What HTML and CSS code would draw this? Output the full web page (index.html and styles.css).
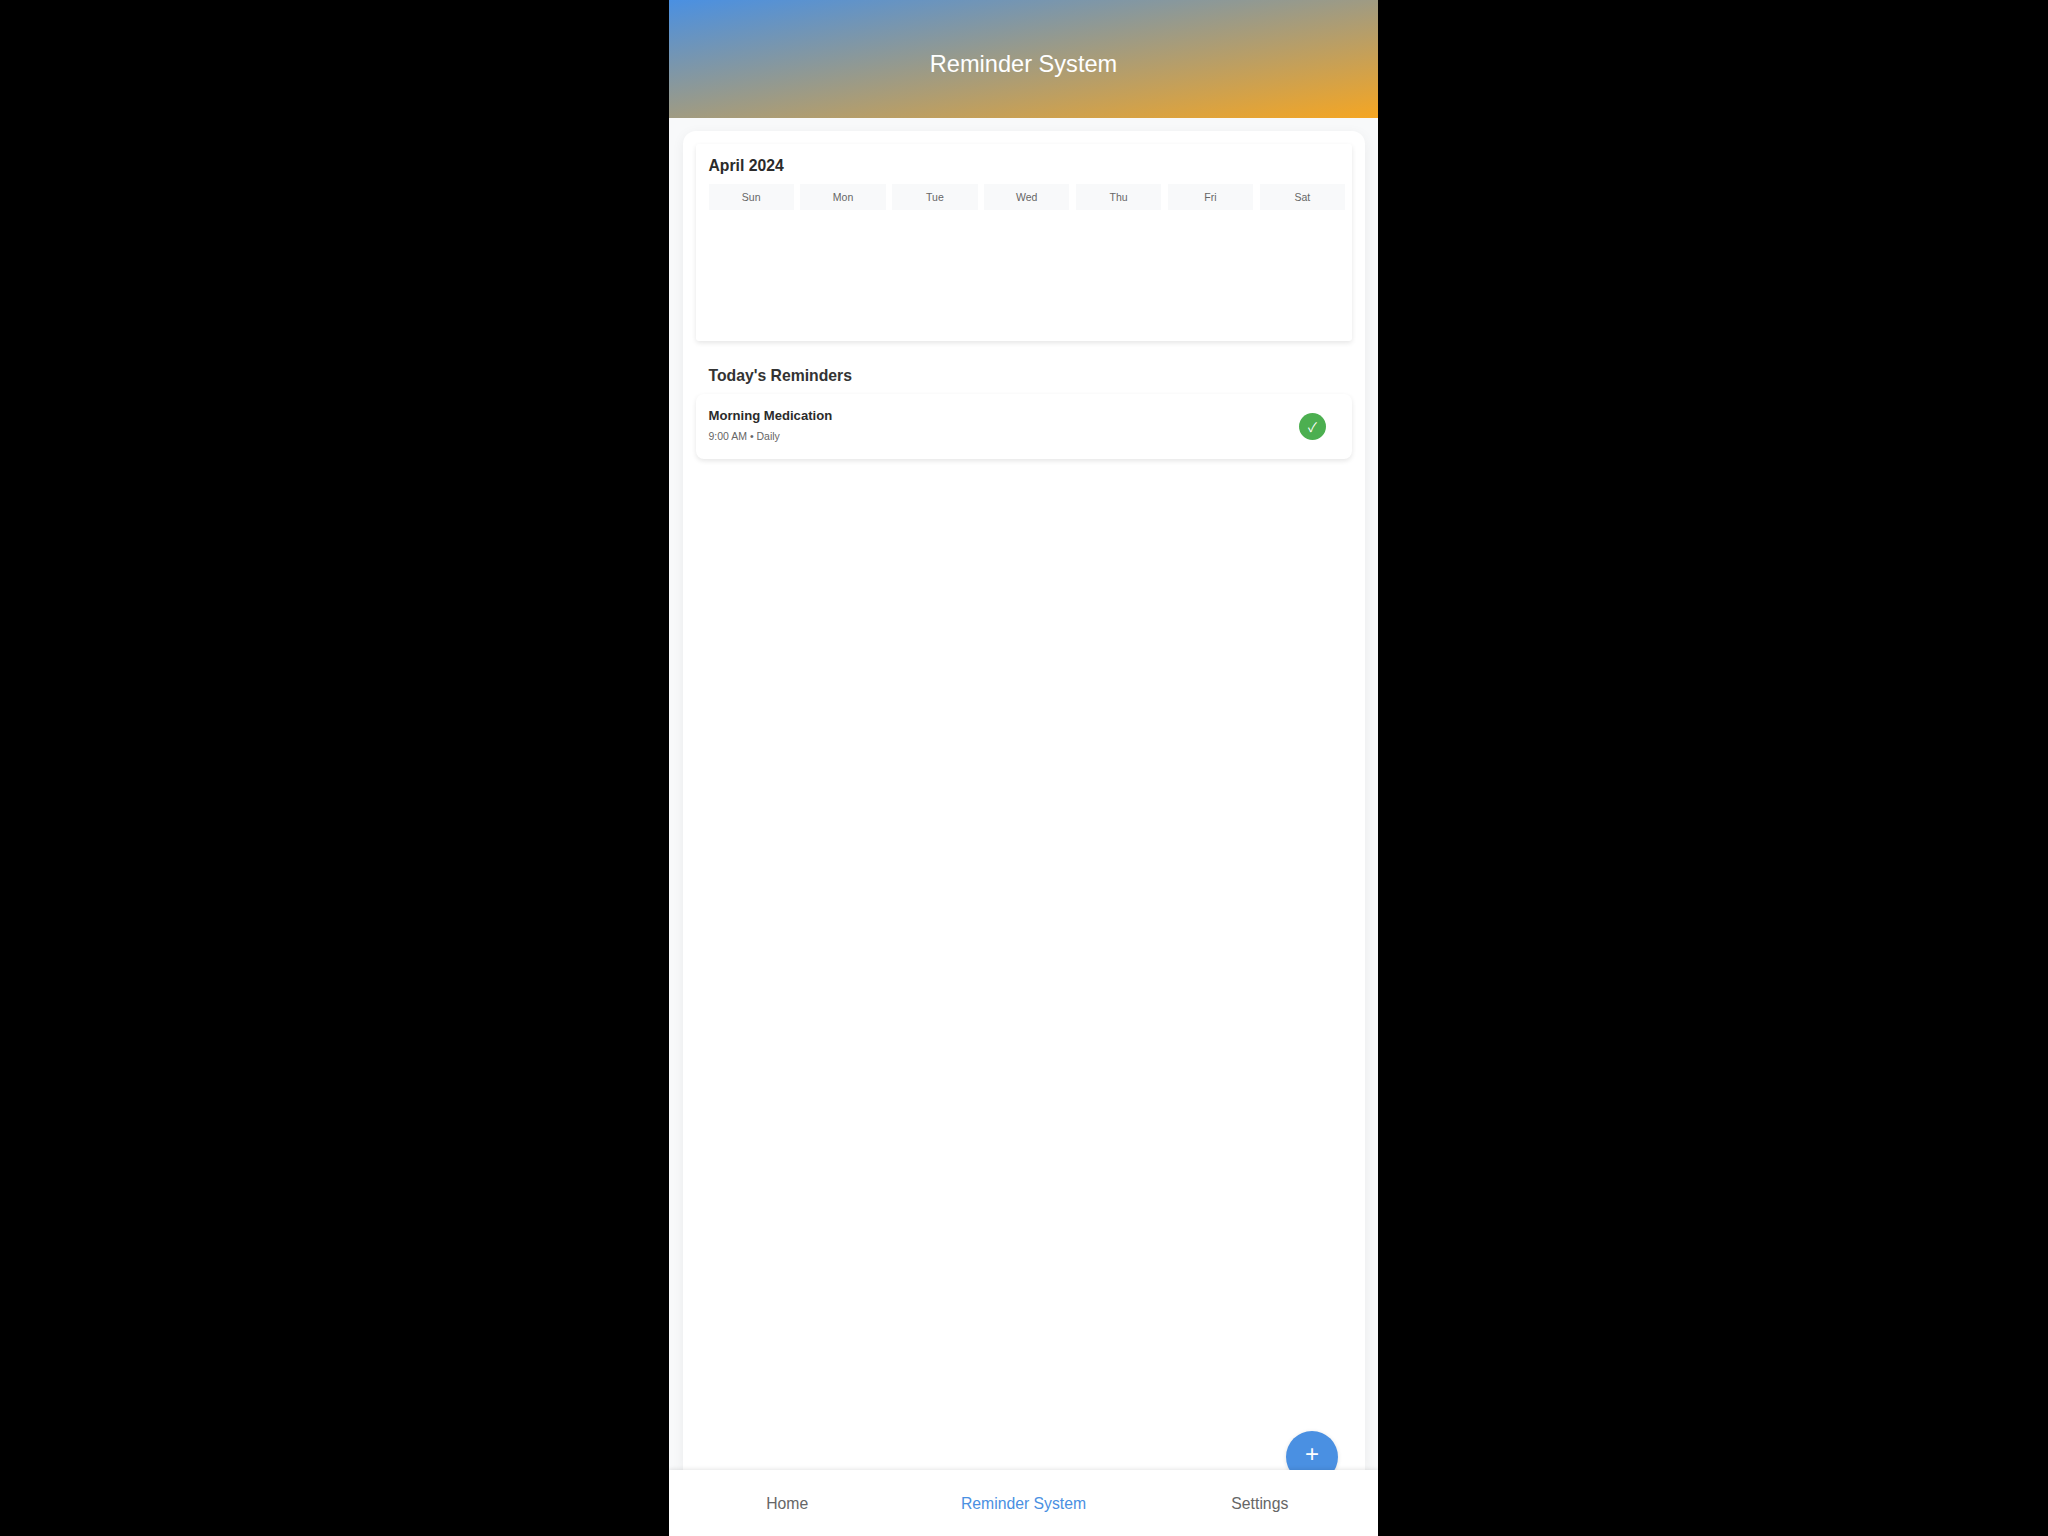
FILE: index.html
```html
<!DOCTYPE html>
<html lang="en">
<head>
    <meta charset="UTF-8">
    <title>Reminder System</title>
    <link rel="stylesheet" href="styles.css">
</head>
<body>

<div class="phone">
    <header class="top-bar">
        <h1>Reminder System</h1>
    </header>

    <main class="content">
        <div class="sheet">
            <section class="calendar">
                <h2>April 2024</h2>
                <div class="days">
                    <div class="day">Sun</div>
                    <div class="day">Mon</div>
                    <div class="day">Tue</div>
                    <div class="day">Wed</div>
                    <div class="day">Thu</div>
                    <div class="day">Fri</div>
                    <div class="day">Sat</div>
                </div>
            </section>

            <h3 class="section-title">Today's Reminders</h3>

            <div class="reminder">
                <div>
                    <h4>Morning Medication</h4>
                    <p>9:00 AM • Daily</p>
                </div>
                <div class="done">✓</div>
            </div>

            <button class="add">+</button>
        </div>
    </main>

    <nav class="tabs">
        <a href="#">Home</a>
        <a href="#" class="active">Reminder System</a>
        <a href="#">Settings</a>
    </nav>
</div>

</body>
</html>
```

FILE: styles.css
```css
body {
    background-color: #000;
    font-family: "Liberation Sans", Arial, sans-serif;
    margin: 0;
    padding: 0 1px 0 0;
}
.phone {
    width: 709px;
    height: 1536px;
    margin: 0 auto;
    background-color: #f8f9fa;
    display: flex;
    flex-direction: column;
    overflow: hidden;
}
.top-bar {
    height: 118px;
    flex-shrink: 0;
    background: linear-gradient(to bottom right, #4a90e2, #f5a623);
    display: flex;
    align-items: center;
    justify-content: center;
}
.top-bar h1 {
    margin: 0;
    color: #fff;
    font-size: 23.6px;
    font-weight: normal;
    position: relative;
    top: 5px;
}
.content {
    flex: 1;
    min-height: 0;
    padding: 13px 13px 0 13.5px;
}
.sheet {
    position: relative;
    height: 100%;
    box-sizing: border-box;
    padding: 13px 13px 0;
    background-color: #fff;
    border-radius: 13px 13px 0 0;
    box-shadow: 0 3px 13px rgba(0,0,0,0.06);
}
.calendar {
    height: 197px;
    box-sizing: border-box;
    padding: 13px 7px 0 13px;
    background-color: #fff;
    border-radius: 3px;
    box-shadow: 0 2px 5px rgba(0,0,0,0.1);
}
.calendar h2 {
    margin: 0 0 9px;
    color: #2b2b2b;
    font-size: 15.75px;
    line-height: 18px;
}
.days {
    display: grid;
    grid-template-columns: repeat(7, 1fr);
    gap: 6.5px;
}
.day {
    height: 26px;
    line-height: 26px;
    text-align: center;
    background-color: #f8f9fa;
    color: #666;
    font-size: 10.5px;
}
.section-title {
    margin: 26px 0 9px 13px;
    color: #333;
    font-size: 15.75px;
    line-height: 18px;
}
.reminder {
    height: 65px;
    box-sizing: border-box;
    padding: 0 26px 0 13px;
    background-color: #fff;
    border-radius: 8px;
    box-shadow: 0 2px 5px rgba(0,0,0,0.1);
    display: flex;
    align-items: center;
    justify-content: space-between;
}
.reminder h4 {
    margin: 0 0 6px;
    color: #2b2b2b;
    font-size: 13.1px;
    line-height: 16px;
    position: relative;
    top: -1px;
}
.reminder p {
    margin: 0;
    color: #666;
    font-size: 10.5px;
    line-height: 13px;
    position: relative;
    top: -1px;
}
.done {
    width: 27px;
    height: 27px;
    border-radius: 50%;
    background-color: #4caf50;
    color: #fff;
    font-family: "Noto Sans CJK JP", "Liberation Sans", sans-serif;
    font-size: 13px;
    line-height: 27px;
    text-align: center;
}
.add {
    position: absolute;
    right: 27px;
    bottom: -13px;
    width: 52px;
    height: 52px;
    border: none;
    border-radius: 50%;
    background-color: #4a90e2;
    color: #fff;
    font-family: inherit;
    font-size: 24px;
    line-height: 46px;
    padding: 0 0 6px;
    box-shadow: 0 1px 4px rgba(0,0,0,0.12);
}
.tabs {
    position: relative;
    height: 66px;
    flex-shrink: 0;
    padding-top: 2px;
    box-sizing: border-box;
    background-color: #fff;
    box-shadow: 0 -1px 4px rgba(0,0,0,0.1);
    display: flex;
    align-items: center;
}
.tabs a {
    flex: 1;
    text-align: center;
    color: #666;
    font-size: 15.75px;
    text-decoration: none;
}
.tabs a.active {
    color: #4a90e2;
}
```
